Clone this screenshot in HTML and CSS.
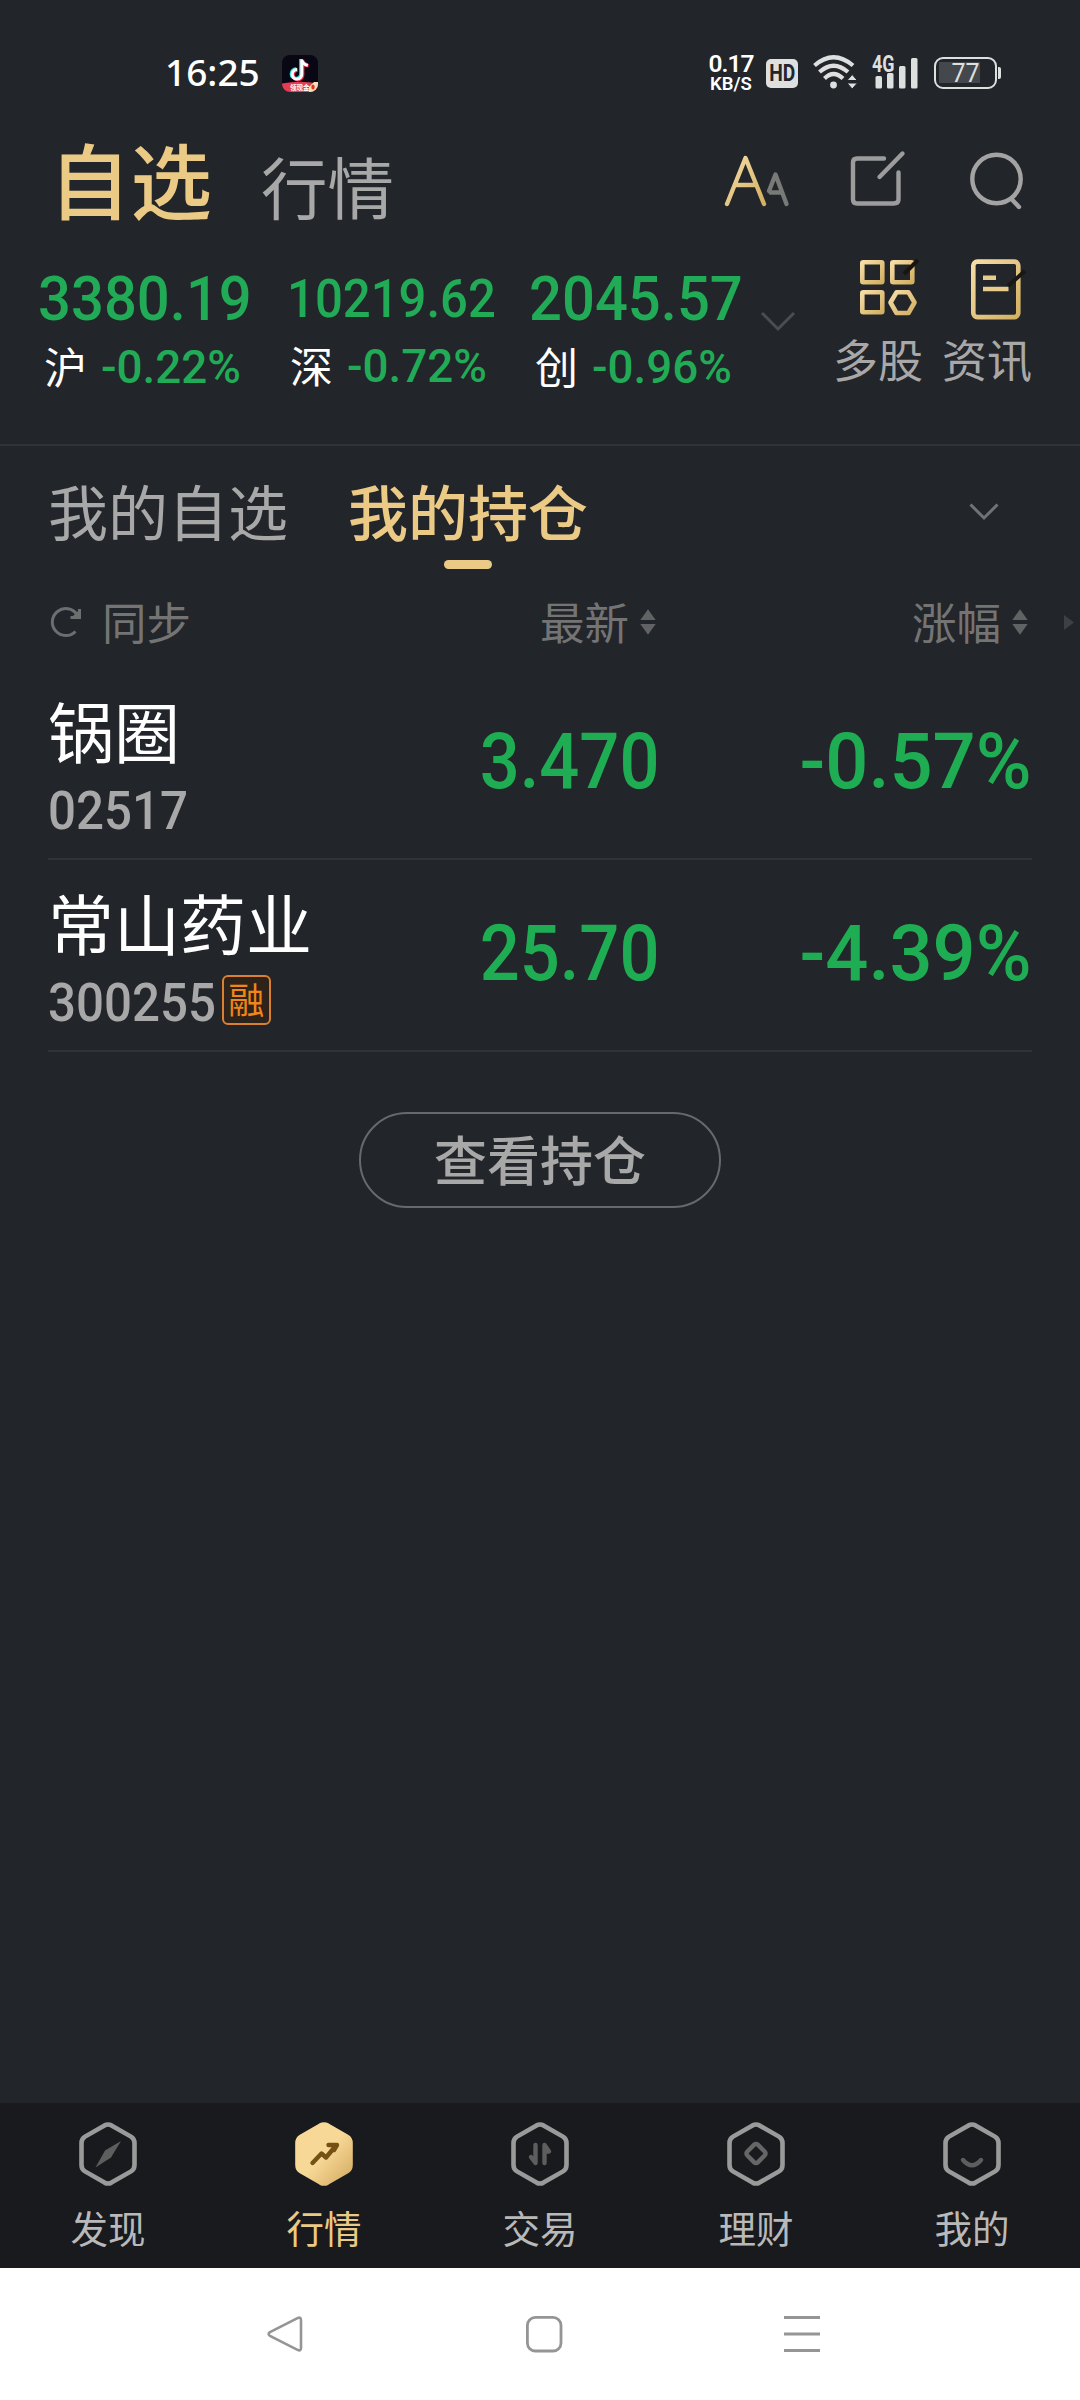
FILE: index.html
```html
<!DOCTYPE html>
<html lang="zh-CN">
<head>
<meta charset="utf-8">
<title>自选</title>
<link rel="stylesheet" href="styles.css">
</head>
<body>
<svg class="defs" width="0" height="0" aria-hidden="true">
  <defs>
    <linearGradient id="gold" x1="0" y1="0" x2="1" y2="1"><stop offset="0" stop-color="#f6dca6"/><stop offset="1" stop-color="#d2b062"/></linearGradient>
    <linearGradient id="goldFill" x1="0" y1="0" x2="1" y2="1"><stop offset="0.5" stop-color="#f8d897"/><stop offset="1" stop-color="#d3ab60"/></linearGradient>
    <path id="hex" d="M25.5 3.4Q29 1.6 32.5 3.4L52 14.6Q55.5 16.8 55.5 21V43Q55.5 47.2 52 49.4L32.5 60.6Q29 62.4 25.5 60.6L6 49.4Q2.500 47.200 2.500 43V21Q2.500 16.800 6 14.600Z"/>
  </defs>
</svg>
<div class="screen">
  <header class="status">
    <span class="time">16:25</span>
    <svg class="app" width="36" height="37" viewBox="0 0 36 37">
      <clipPath id="appClip"><rect width="36" height="37" rx="8"/></clipPath>
      <g clip-path="url(#appClip)">
        <rect width="36" height="37" fill="#080713"/>
        <path d="M0 28.500Q18 25 36 28.500V37H0Z" fill="#e33d55"/>
        <path d="M27 32l5-5h4v6l-5 4h-4z" fill="#f7dfb4"/><ellipse cx="31" cy="32" rx="1.700" ry="2.600" fill="#d9342f"/>
      </g>
      <g fill="none" stroke-width="3.600">
        <path d="M19 4V18.500A4.800 4.800 0 1 1 14.200 14M19 4.500Q20 9 25 9.800" stroke="#25e8e6"/>
        <path d="M20.600 5V19.500A4.800 4.800 0 1 1 15.800 15M20.600 5.500Q21.600 10 26.600 10.800" stroke="#f22b54"/>
        <path d="M19.800 4.500V19A4.800 4.800 0 1 1 15 14.500M19.800 5Q20.800 9.500 25.800 10.300" stroke="#fff" stroke-width="3"/>
      </g>
      <text x="8" y="34.500" font-size="6.500" font-weight="700" fill="#fff" class="app-text">领现金</text>
    </svg>
    <span class="speed"><b>0.17</b><i>KB/S</i></span>
    <span class="hd"><span>HD</span></span>
    <svg class="wifi" width="46" height="36" viewBox="0 0 46 36">
      <g fill="none" stroke="#dedfdf" stroke-width="4.200">
        <path d="M1.500 11.500Q20.500-5 40 11.500"/><path d="M6.500 18Q20.500 5.500 35 18"/><path d="M11.500 24.500Q20.500 15.500 30 24.500"/>
      </g>
      <circle cx="20.500" cy="31" r="3.400" fill="#dedfdf"/>
      <path d="M34 26.500l5.200-6 5.200 6zM34 29l5.200 6 5.200-6z" fill="#dedfdf" stroke="#22252a" stroke-width="1"/>
    </svg>
    <span class="signal">
      <span class="gen">4G</span>
      <svg width="46" height="34" viewBox="0 0 46 34" fill="#dedfdf"><rect x="3.500" y="20" width="6.500" height="12.500" rx="1.500"/><rect x="15" y="17" width="6.500" height="15.500" rx="1.500"/><rect x="27" y="10" width="6.500" height="22.500" rx="1.500"/><rect x="39" y="2" width="6.500" height="30.500" rx="1.500"/></svg>
    </span>
    <span class="battery"><span>77</span></span><span class="nub"></span>
  </header>

  <div class="head">
    <h1>自选</h1><h2>行情</h2>
    <svg class="ic-aa" width="66" height="58" viewBox="0 0 66 58" fill="none" stroke-linecap="round" stroke-linejoin="round" stroke-width="4.400">
      <path d="M45 37L51.500 20.500 62.500 50M46.500 38.500H58" stroke="#777a77"/>
      <path d="M3 50L21.500 4 40 50M12 31H31" stroke="url(#gold)"/>
    </svg>
    <svg class="ic-edit" width="58" height="58" viewBox="0 0 58 58" fill="none" stroke="#9c9c9c" stroke-width="4.400" stroke-linecap="round">
      <path d="M35 8.500H8Q4 8.500 4 12.500V49.500Q4 53.500 8 53.500H44.500Q49.500 53.500 49.500 49.500V22.500M30.500 27L53.500 3.500"/>
    </svg>
    <svg class="ic-search" width="58" height="60" viewBox="0 0 58 60" fill="none" stroke="#a3a3a3" stroke-width="4.400" stroke-linecap="round">
      <ellipse cx="28.500" cy="28" rx="24.200" ry="24.200"/><path d="M43.500 48L51 56"/>
    </svg>
  </div>

  <section class="indices">
    <div class="index">
      <div class="value"><span class="num">3380.19</span></div>
      <div class="change"><em>沪</em><span class="num">-0.22%</span></div>
    </div>
    <div class="index mid">
      <div class="value"><span class="num">10219.62</span></div>
      <div class="change"><em>深</em><span class="num">-0.72%</span></div>
    </div>
    <div class="index last">
      <div class="value"><span class="num">2045.57</span></div>
      <div class="change"><em>创</em><span class="num">-0.96%</span></div>
    </div>
    <svg class="more" width="36" height="22" viewBox="0 0 36 22" fill="none" stroke="#4b4e51" stroke-width="3"><path d="M2 2L18 18 34 2"/></svg>
    <div class="tool">
      <svg width="62" height="66" viewBox="0 0 62 66" fill="none" stroke="url(#gold)" stroke-width="4.600">
        <rect x="4.300" y="8.300" width="20" height="20" rx="1"/><rect x="34.300" y="8.300" width="20" height="20" rx="1"/><rect x="4.300" y="38.300" width="20" height="20" rx="1"/>
        <path d="M38.500 38.300H50.500L56.500 48.500 50.500 59H38.500L32.500 48.500Z" stroke-linejoin="round"/>
        <path d="M46 20L60 6" stroke="#19140f" stroke-width="4"/>
      </svg>
      <span>多股</span>
    </div>
    <div class="tool news">
      <svg width="62" height="66" viewBox="0 0 62 66" fill="none" stroke="url(#gold)" stroke-width="4.600">
        <rect x="5.300" y="7.600" width="45" height="55.500" rx="4"/>
        <path d="M15 23.700H28M15 35H40.500" stroke="#e8cc8d"/>
        <path d="M40 32L57 17" stroke="#1a1812" stroke-width="4"/>
      </svg>
      <span>资讯</span>
    </div>
  </section>

  <nav class="tabs">
    <span class="tab">我的自选</span>
    <span class="tab active">我的持仓</span>
    <svg width="30" height="20" viewBox="0 0 30 20" fill="none" stroke="#707376" stroke-width="3"><path d="M1.500 2.500L15 16 28.500 2.500"/></svg>
  </nav>

  <div class="cols">
    <svg class="sync" width="32" height="34" viewBox="0 0 32 34" fill="none" stroke="#6c6e6f" stroke-width="3"><path d="M25.500 26.500A13.500 13.500 0 1 1 27 9.500"/><path d="M29.500 4V12.500H20.500" /><path d="M29 5V12H22Z" fill="#6c6e6f" stroke="none"/></svg>
    <span class="c1">同步</span>
    <span class="c2">最新</span>
    <svg class="sort" width="16" height="26" viewBox="0 0 16 26" fill="#606264"><path d="M8 .3L15.700 11H.3ZM.3 15H15.700L8 25.700Z"/></svg>
    <span class="c3">涨幅</span>
    <svg class="sort" width="16" height="26" viewBox="0 0 16 26" fill="#606264"><path d="M8 .3L15.700 11H.3ZM.3 15H15.700L8 25.700Z"/></svg>
    <svg class="next" width="10" height="15" viewBox="0 0 10 15" fill="#3e4144"><path d="M0 0L10 7.500 0 15Z"/></svg>
  </div>

  <main class="list">
    <article class="row">
      <div class="stock"><strong>锅圈</strong><div class="code"><span class="num">02517</span></div></div>
      <div class="price"><span class="num">3.470</span></div>
      <div class="pct"><span class="num">-0.57%</span></div>
    </article>
    <article class="row">
      <div class="stock"><strong>常山药业</strong><div class="code"><span class="num">300255</span><span class="badge">融</span></div></div>
      <div class="price"><span class="num">25.70</span></div>
      <div class="pct"><span class="num">-4.39%</span></div>
    </article>
    <div class="holdings">查看持仓</div>
  </main>

  <nav class="bottom">
    <div class="item">
      <svg width="58" height="64" viewBox="0 0 58 64"><use href="#hex" fill="none" stroke="#9a9a9a" stroke-width="4.600"/><path d="M42 19L32 35.500 16.500 45.500 26 28.500Z" fill="#5e5e5e"/></svg>
      <span>发现</span>
    </div>
    <div class="item active">
      <svg width="58" height="64" viewBox="0 0 58 64"><use href="#hex" fill="url(#goldFill)" stroke="url(#goldFill)" stroke-width="4.600"/><path d="M17.500 41L26.500 31.500 31 35.500 41 23.500M33.500 23H42L39 28" fill="none" stroke="#765114" stroke-width="4.400" stroke-linecap="round" stroke-linejoin="round"/></svg>
      <span>行情</span>
    </div>
    <div class="item">
      <svg width="58" height="64" viewBox="0 0 58 64"><use href="#hex" fill="none" stroke="#9a9a9a" stroke-width="4.600"/><path d="M24.500 23V41L20 35M33.500 41V23L38 29.500H34" fill="none" stroke="#5e5e5e" stroke-width="4.400" stroke-linecap="round" stroke-linejoin="round"/></svg>
      <span>交易</span>
    </div>
    <div class="item">
      <svg width="58" height="64" viewBox="0 0 58 64"><use href="#hex" fill="none" stroke="#9a9a9a" stroke-width="4.600"/><rect x="21.500" y="24" width="15" height="15" rx="2.500" transform="rotate(45 29 31.500)" fill="none" stroke="#666" stroke-width="4.400"/></svg>
      <span>理财</span>
    </div>
    <div class="item">
      <svg width="58" height="64" viewBox="0 0 58 64"><use href="#hex" fill="none" stroke="#9a9a9a" stroke-width="4.600"/><path d="M20 38Q29 48.500 38 38" fill="none" stroke="#5e5e5e" stroke-width="4.400" stroke-linecap="round"/></svg>
      <span>我的</span>
    </div>
  </nav>

  <footer class="system">
    <svg width="36" height="36" viewBox="0 0 36 36" fill="none" stroke="#959595" stroke-width="2.600"><path d="M30.500 2.200Q34 .5 34 4.200V31.800Q34 35.500 30.500 33.800L3 19.800Q.2 18 3 16.200Z"/></svg>
    <svg width="38" height="38" viewBox="0 0 38 38" fill="none" stroke="#959595" stroke-width="2.800"><rect x="2.400" y="2.400" width="33.600" height="33.600" rx="8"/></svg>
    <svg width="36" height="36" viewBox="0 0 36 36" fill="none" stroke="#959595" stroke-width="3"><path d="M0 1.500H36M0 18H36M0 34.500H36"/></svg>
  </footer>
</div>
</body>
</html>
```
FILE: styles.css
```css
* { box-sizing: border-box; }
body {
  margin: 0;
  background: #22252a;
  font-family: "Noto Sans CJK SC", sans-serif;
  color: #a8a8a8;
}
.defs { display: block; }
svg { display: block; flex: none; }
.screen { width: 1080px; height: 2400px; display: flex; flex-direction: column; overflow: hidden; }
.screen > * { flex: none; }
span, em, strong, h1, h2, b, i { white-space: nowrap; line-height: 1; font-style: normal; font-weight: 400; margin: 0; }
.num { display: inline-block; font-family: Roboto, sans-serif; font-weight: 500; transform-origin: left; }

.status { height: 110px; padding: 36px 0 0 165px; display: flex; align-items: center; color: #fff; }
.time { width: 117px; margin-top: -3px; font: 500 37px/1 "Noto Sans", sans-serif; }
.app-text { font-family: "Noto Sans CJK SC", sans-serif; }
.speed { width: 44px; margin-left: 391px; display: flex; flex-direction: column; align-items: center; font-family: Roboto, sans-serif; }
.speed b { font-size: 24.500px; line-height: 21px; font-weight: 600; letter-spacing: -1px; }
.speed i { font-size: 18.500px; line-height: 20px; font-weight: 600; }
.hd { width: 32px; height: 29px; margin-left: 13px; border-radius: 5px; background: #dedfdf; color: #22252a; display: flex; align-items: center; justify-content: center; }
.hd span { font: 700 24px/1 Roboto, sans-serif; transform: scaleX(.8); }
.wifi { margin-left: 15px; margin-top: -3px; }
.signal { position: relative; margin-left: 13px; }
.gen { position: absolute; left: 0; top: -3px; font: 700 23px/1 Roboto, sans-serif; color: #dedfdf; transform: scaleX(.78); transform-origin: left; }
.battery { width: 63px; height: 32px; margin-left: 16px; border: 2.500px solid #dedfdf; border-radius: 9px; color: #dedfdf; display: flex; align-items: center; justify-content: center; background: linear-gradient(#44484c, #44484c) 3px 3px / 41px 21px no-repeat; }
.battery span { font: 400 25px/1 Roboto, sans-serif; }
.nub { width: 3px; height: 12px; margin-left: 1px; border-radius: 0 2px 2px 0; background: #dedfdf; }

.head { height: 140px; padding: 0 0 0 49px; display: flex; align-items: flex-start; }
.head h1 { width: 212px; margin-top: 27px; font-size: 81.500px; font-weight: 500; color: #ebca86; }
.head h2 { width: 463px; margin-top: 42px; font-size: 66.500px; font-weight: 400; }
.ic-aa { margin-top: 44px; }
.ic-edit { margin: 40px 0 0 59px; }
.ic-search { margin: 41px 0 0 61px; }

.indices { height: 196px; padding-left: 38px; border-bottom: 2px solid #303338; display: flex; align-items: flex-start; }
.index { width: 249px; padding-top: 18px; color: #22ab56; }
.index.last { width: 233px; margin-left: -7px; }
.value { height: 62px; display: flex; align-items: center; font-size: 62px; }
.value .num { transform: scaleX(.935); }
.mid .value { height: 60px; margin-bottom: 14px; font-size: 54.500px; }
.mid .value .num { transform: scaleX(.9); }
.change { height: 50px; margin-top: 13px; padding-left: 6px; display: flex; align-items: center; font-size: 45.500px; }
.mid .change { padding-left: 3px; }
.change em { width: 57px; margin-top: -5px; font-size: 43px; color: #fff; }
.change .num { transform: scaleX(1.005); }
.more { margin-top: 61px; margin-left: -2px; }
.tool { width: 90px; margin: 4px 0 0 37px; display: flex; flex-direction: column; align-items: center; gap: 16px; font-size: 45px; }
.tool.news { margin-left: 19px; }
.tool svg { margin-left: 21px; }
.tool.news svg { margin-left: 24px; }

.tabs { height: 134px; padding: 34px 0 0 48px; display: flex; align-items: flex-start; }
.tab { position: relative; width: 240px; font-size: 60px; }
.tab.active { margin-left: 60px; width: 240px; font-weight: 500; color: #ebca86; }
.tab.active::after { content: ""; position: absolute; left: 96px; top: 80px; width: 48px; height: 9px; border-radius: 5px; background: #ebca86; }
.tabs svg { margin: 22px 0 0 381px; }

.cols { height: 84px; padding-left: 50px; display: flex; align-items: center; color: #747474; font-size: 44.500px; }
.cols > span { margin-top: -1px; }
.c1 { width: 88px; margin-left: 20px; }
.c2 { width: 88px; margin-left: 350px; }
.c3 { width: 88px; margin-left: 256px; }
.sort { margin-left: 12px; }
.next { margin-left: 36px; }

.list { height: 1439px; padding: 4px 48px 0; }
.row { height: 192px; display: grid; grid-template-columns: 320px 291px 1fr; border-bottom: 2px solid #303338; }
.stock { padding-top: 28px; }
.stock strong { display: block; height: 66px; font-size: 66px; color: #fff; }
.code { height: 54px; margin-top: 22px; display: flex; align-items: center; font-size: 53px; }
.code .num { transform: scaleX(.93); }
.badge { width: 49px; height: 50px; margin: -6px 0 0 -7px; border: 2px solid #d98032; border-radius: 6px; background: #2e231a; color: #f08519; font-size: 36px; line-height: 42px; text-align: center; }
.price, .pct { padding-top: 56px; display: flex; justify-content: flex-end; align-items: flex-start; font-size: 77px; color: #1fad54; }
.price .num, .pct .num { transform-origin: right; }
.price .num { transform: scaleX(.915); }
.pct .num { transform: scaleX(.985); }
.holdings { width: 362px; height: 96px; margin: 60px auto 0; border: 2px solid #666a70; border-radius: 48px; text-align: center; font-size: 53px; font-weight: 500; line-height: 89px; }

.bottom { height: 165px; background: #191a1d; display: grid; grid-template-columns: repeat(5, 1fr); color: #b9b9b9; font-size: 37.500px; }
.item { padding-top: 19px; display: flex; flex-direction: column; align-items: center; gap: 22px; }
.item.active { color: #ebca86; }
.system { height: 132px; background: #fff; padding: 47px 0 0 267px; display: flex; align-items: flex-start; }
.system svg { margin-top: 1px; }
.system svg:nth-child(2) { margin: 0 0 0 222px; }
.system svg:nth-child(3) { margin-left: 221px; }
```
